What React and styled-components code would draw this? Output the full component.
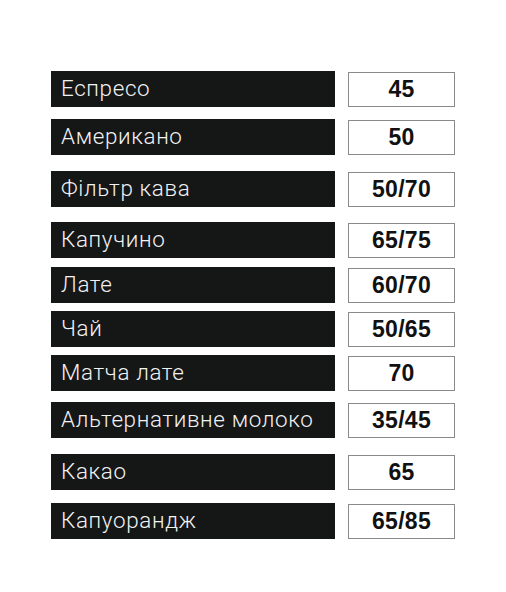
import React from "react";
import styled, { createGlobalStyle } from "styled-components";

const Global = createGlobalStyle`
  html, body { margin: 0; padding: 0; background: #ffffff; }
  body { width: 506px; height: 592px; overflow: hidden; }
`;

const Page = styled.div`
  display: flex;
  flex-direction: column;
  padding: 71px 0 0 51px;
`;

const Row = styled.div`
  display: flex;
  align-items: center;
  gap: 13px;
  margin-top: ${(p) => p.$space}px;
`;

const Name = styled.div`
  box-sizing: border-box;
  width: 284px;
  height: 36px;
  background: #151616;
  color: #f2f2f2;
  display: flex;
  align-items: center;
  padding: 0 0 3px 10px;
  font-family: Roboto, "Liberation Sans", sans-serif;
  font-weight: 300;
  font-size: 22.4px;
  letter-spacing: 0.65px;
`;

const Price = styled.div`
  box-sizing: border-box;
  width: 107px;
  height: 35px;
  border: 1px solid #8a8a8a;
  background: #ffffff;
  color: #111111;
  display: flex;
  align-items: center;
  justify-content: center;
  font-family: "Liberation Sans", Arial, sans-serif;
  font-weight: 700;
  font-size: 23px;
  letter-spacing: 0.3px;
`;

const items = [
  ["Еспресо", "45", 0],
  ["Американо", "50", 12],
  ["Фільтр кава", "50/70", 16],
  ["Капучино", "65/75", 15],
  ["Лате", "60/70", 9],
  ["Чай", "50/65", 8],
  ["Матча лате", "70", 8],
  ["Альтернативне молоко", "35/45", 11],
  ["Какао", "65", 16],
  ["Капуорандж", "65/85", 13],
];

export default function App() {
  return (
    <>
      <Global />
      <Page>
        {items.map(([name, price, space]) => (
          <Row key={name} $space={space}>
            <Name>{name}</Name>
            <Price>{price}</Price>
          </Row>
        ))}
      </Page>
    </>
  );
}
